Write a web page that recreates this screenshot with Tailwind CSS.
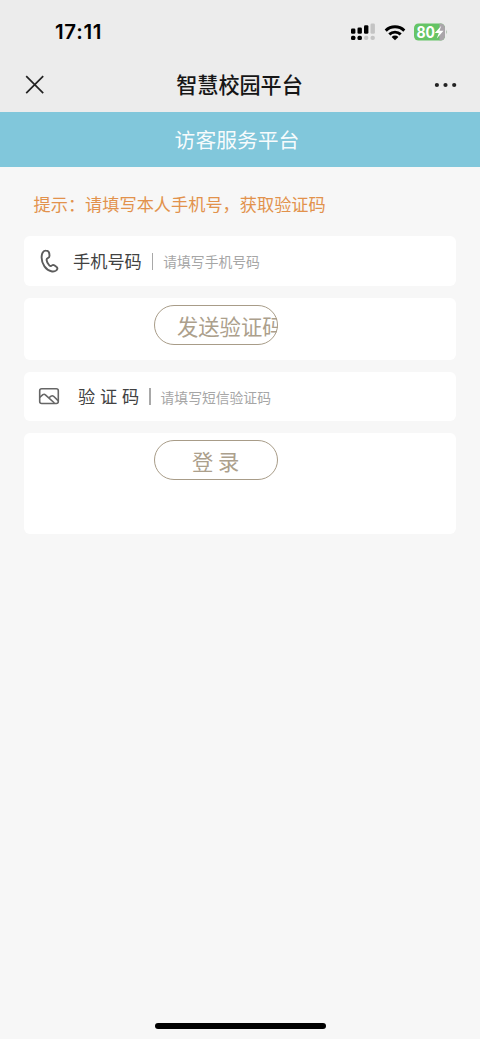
<!DOCTYPE html>
<html lang="zh-CN">
<head>
<meta charset="utf-8">
<title>智慧校园平台</title>
<script src="https://cdn.jsdelivr.net/npm/@tailwindcss/browser@4"></script>
</head>
<body class="h-[1039px] overflow-hidden bg-[#f7f7f7] font-['Noto_Sans_CJK_SC',sans-serif] flex flex-col">
<header class="h-[112px] shrink-0 bg-[#ececec] text-black">
  <div class="h-[58px] flex items-center justify-between pt-[6px] pl-[55px] pr-[31px]">
    <span class="font-['Inter',sans-serif] font-semibold text-[20.5px] leading-none tracking-[0.7px]">17:11</span>
    <div class="flex items-center">
      <svg class="w-[26px] h-[18px]" viewBox="0 0 26 18">
        <g fill="#000"><rect x="1" y="5.500" width="4.400" height="5.300" rx="1.300"/><rect x="7.500" y="4.500" width="4.400" height="6.300" rx="1.300"/><rect x="14" y="2.200" width="4.400" height="8.600" rx="1.300"/><rect x="1" y="12.700" width="4.400" height="4.400" rx="1.500"/><rect x="7.500" y="12.700" width="4.400" height="4.400" rx="1.500"/></g>
        <g fill="#c4c4c4"><rect x="20.500" y="0.500" width="4.400" height="10.300" rx="1.300"/><rect x="14" y="12.700" width="4.400" height="4.400" rx="2"/><rect x="20.500" y="12.700" width="4.400" height="4.400" rx="2"/></g>
      </svg>
      <svg class="ml-[8px] w-[22px] h-[17px]" viewBox="0 0 22 17">
        <g fill="none" stroke="#000" stroke-width="2.900"><path d="M1.700 6.600a13.300 13.300 0 0 1 18.600 0"/><path d="M5.300 10.400a8.200 8.200 0 0 1 11.400 0"/></g>
        <path d="M7.600 12.900a4.900 4.900 0 0 1 6.800 0L11 16.300z"/>
      </svg>
      <svg class="ml-[8px] w-[35px] h-[18px]" viewBox="0 0 35 18">
        <defs><clipPath id="b"><rect x="0" y="0.500" width="31" height="17" rx="4.500"/></clipPath></defs>
        <g clip-path="url(#b)"><rect width="31" height="18" fill="#65c466"/><rect x="25.500" width="6" height="18" fill="#aaa5aa"/></g>
        <path d="M32.300 6.500q1.700 2.500 0 5z" fill="#9bb59b"/>
        <text x="2.500" y="14.600" font-family="Inter, sans-serif" font-weight="700" font-size="15.500" textLength="18.500" lengthAdjust="spacingAndGlyphs" fill="#fff">80</text>
        <path d="M27.300 2.800L20.800 10h4l-2 5.600 6.700-7.800h-4z" fill="#fff"/>
      </svg>
    </div>
  </div>
  <div class="h-[54px] grid grid-cols-[60px_1fr_60px] items-center">
    <svg class="ml-[25px] w-[20px] h-[20px]" viewBox="0 0 20 20" fill="none" stroke="#222" stroke-width="1.700"><path d="M1.200 1.200l17 17M18.200 1.200l-17 17"/></svg>
    <h1 class="text-center text-[21.1px] leading-none font-medium text-[#161616] whitespace-nowrap pr-px">智慧校园平台</h1>
    <svg class="ml-[14px] w-[24px] h-[6px]" viewBox="0 0 24 6" fill="#222"><circle cx="2.900" cy="3" r="2.100"/><circle cx="11.500" cy="3" r="2.100"/><circle cx="20.200" cy="3" r="2.100"/></svg>
  </div>
</header>
<div class="h-[55px] shrink-0 bg-[#81c7db] flex items-center justify-center pr-[6px] text-white/95 text-[20.8px] leading-none font-normal">访客服务平台</div>
<main class="flex flex-col px-[24px]">
  <p class="h-[69px] pl-[9.500px] pt-[5px] flex items-center text-[17.200px] leading-none text-[#e2924c] font-normal whitespace-nowrap">提示：请填写本人手机号，获取验证码</p>
  <div class="h-[50px] rounded-[6px] bg-white flex items-center">
    <svg class="ml-[15px] w-[20px] h-[24px]" viewBox="0 0 20 24" fill="none" stroke="#5c5c5c" stroke-width="1.900" stroke-linejoin="round" stroke-linecap="round"><path d="M7 1.600C4.200 1.500 2.600 4.500 2.600 8.600c0 6.300 4.400 12.600 9.700 13.700 3 .6 5.500-.7 6-2.400.3-1-.2-1.700-1-2.200l-2-1.400c-.9-.6-1.600-.5-2.300.1-.9.800-1.800.8-2.700-.1-1.500-1.500-2.500-3.400-2.700-5.200-.1-1 .3-1.500 1.200-1.900 1.300-.6 1.800-1.300 1.700-2.600l-.2-2C10.100 2.600 8.900 1.600 7 1.600z"/></svg>
    <label class="ml-[14px] text-[17.2px] leading-none text-[#424242] font-normal">手机号码</label>
    <span class="ml-[10px] w-[1.500px] h-[17px] bg-[#a8a8a8]"></span>
    <span class="ml-[10px] mt-[2px] text-[13.8px] leading-none text-[#a6a6a6] font-normal">请填写手机号码</span>
  </div>
  <div class="mt-[12px] h-[62px] rounded-[6px] bg-white pt-[7px] pl-[130px]">
    <button class="flex items-center w-[124px] h-[40px] rounded-full outline-[1.5px] -outline-offset-[1.500px] outline-[#a89c88] overflow-hidden pl-[23px] pt-[1px] text-[21.3px] leading-none font-normal text-[#aca08c] whitespace-nowrap">发送验证码</button>
  </div>
  <div class="mt-[12px] h-[49px] rounded-[6px] bg-white flex items-center">
    <svg class="ml-[14px] -mt-px w-[22px] h-[18px]" viewBox="0 0 22 18" fill="none" stroke="#666" stroke-width="1.600" stroke-linejoin="round"><rect x="1.700" y="1.700" width="18.600" height="14.800" rx="2"/><path d="M1.700 10.300L4.900 7.700q1.300-.9 2.500.1l9 8.200M10.800 10.800l2.300-1.700q1.300-.8 2.500.2l4.700 4.600"/></svg>
    <label class="ml-[18px] text-[17.2px] leading-none text-[#424242] font-normal whitespace-nowrap -mt-px [word-spacing:0.9px]">验 证 码</label>
    <span class="ml-[10px] w-[1.500px] h-[17px] bg-[#a8a8a8]"></span>
    <span class="ml-[10px] mt-[2px] text-[13.8px] leading-none text-[#a6a6a6] font-normal">请填写短信验证码</span>
  </div>
  <div class="mt-[12px] h-[101px] rounded-[6px] bg-white pt-[7px] pl-[130px]">
    <button class="flex items-center w-[124px] h-[40px] rounded-full outline-[1.5px] -outline-offset-[1.500px] outline-[#a89c88] pl-[38px] pt-[2px] text-[21.3px] leading-none font-normal text-[#aca08c] whitespace-nowrap">登 录</button>
  </div>
</main>
<footer class="mt-auto h-[16px] flex justify-center items-start"><div class="w-[171px] h-[6px] rounded-full bg-black"></div></footer>
</body>
</html>
